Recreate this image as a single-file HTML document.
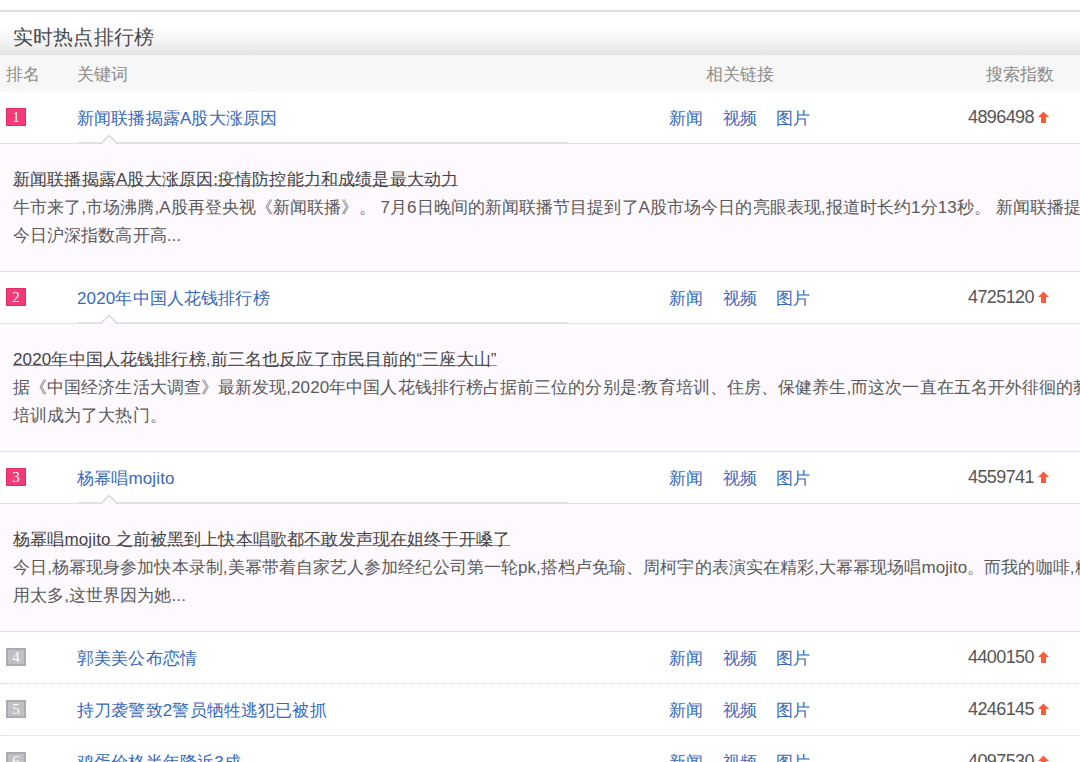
<!DOCTYPE html>
<html><head><meta charset="utf-8">
<style>
*{margin:0;padding:0;box-sizing:border-box}
html,body{width:1080px;height:762px;overflow:hidden;background:#fff}
body{font-family:"Liberation Sans",sans-serif;font-size:17px;color:#333;position:relative;letter-spacing:0.15px}
.a{position:absolute;white-space:nowrap}
.topline{position:absolute;left:0;top:10px;width:1080px;height:2px;background:#e0e0e6}
.band{position:absolute;left:0;top:12px;width:1080px;height:43px;background:linear-gradient(#fff 0%,#fff 30%,#f6f6f7 65%,#e4e4e6 100%)}
.title{left:13px;top:23px;font-size:20px;color:#4a4a4a;line-height:28px}
.head{position:absolute;left:0;top:55px;width:1080px;height:37px;background:#f7f7f7}
.hd{top:64px;color:#8c8c8c;line-height:22px}
.row{position:absolute;left:0;width:1080px;height:52px;background:#fff;border-bottom:1px solid #e1e1e5}
.row.ex::after{content:"";position:absolute;left:77px;width:491px;bottom:0;height:1px;background:#e3e3e7}
.notch{position:absolute;left:100px;top:-10px}
.badge{position:absolute;left:6px;top:16px;width:20px;height:18px;background:#f13a76;border:1px solid #e22b69;color:#fff;font-family:"Liberation Serif",serif;font-size:15px;line-height:16px;text-align:center;letter-spacing:0}
.badge.g{background:#c0c1c4;border:2px solid #aaabaf;line-height:14px}
.kw{position:absolute;left:77px;top:16px;color:#386abb;line-height:22px}
.lk{position:absolute;top:16px;color:#386abb;line-height:22px}
.num{position:absolute;left:968px;top:14px;color:#555;line-height:22px;font-size:18px;letter-spacing:-0.6px}
.arr{position:absolute;left:1038px;top:19px}
.det{position:absolute;left:0;width:1080px;height:128px;background:#fdf9fe;border-bottom:1px solid #e1e1e5}
.det .ln{position:absolute;left:13px;white-space:nowrap;color:#5a5a5a;line-height:28px;letter-spacing:0.08px}
.det .t{letter-spacing:0.15px;color:#444;text-decoration:underline;text-decoration-color:#8c8c8c;text-underline-offset:0px}
.dot{border-bottom:1px dotted #d8d8d8}
</style></head>
<body>
<div class="topline"></div>
<div class="band"></div>
<div class="a title">实时热点排行榜</div>
<div class="head"></div>
<div class="a hd" style="left:6px">排名</div>
<div class="a hd" style="left:77px">关键词</div>
<div class="a hd" style="left:706px">相关链接</div>
<div class="a hd" style="left:986px">搜索指数</div>

<!-- row 1 -->
<div class="row ex" style="top:92px">
  <div class="badge">1</div>
  <div class="kw">新闻联播揭露A股大涨原因</div>
  <div class="lk" style="left:669px">新闻</div><div class="lk" style="left:723px">视频</div><div class="lk" style="left:776px">图片</div>
  <div class="num">4896498</div>
  <svg class="arr" width="11" height="12" viewBox="0 0 11 12"><path d="M5.5 0.5L11 6H8V12H3V6H0Z" fill="#fa5d3e"/></svg>
</div>
<div class="det" style="top:144px"><svg class="notch" width="18" height="11" viewBox="0 0 18 11"><path d="M0.5 10L9 1.5L17.5 10" fill="#fdf9fe" stroke="#d8d8d8" stroke-width="1.3"/><rect x="0" y="10" width="18" height="1" fill="#fdf9fe"/></svg>
  <div class="ln t" style="top:22px">新闻联播揭露A股大涨原因:疫情防控能力和成绩是最大动力</div>
  <div class="ln" style="top:50px">牛市来了,市场沸腾,A股再登央视《新闻联播》。 7月6日晚间的新闻联播节目提到了A股市场今日的亮眼表现,报道时长约1分13秒。 新闻联播提到,</div>
  <div class="ln" style="top:78px">今日沪深指数高开高...</div>
</div>

<!-- row 2 -->
<div class="row ex" style="top:272px">
  <div class="badge">2</div>
  <div class="kw">2020年中国人花钱排行榜</div>
  <div class="lk" style="left:669px">新闻</div><div class="lk" style="left:723px">视频</div><div class="lk" style="left:776px">图片</div>
  <div class="num">4725120</div>
  <svg class="arr" width="11" height="12" viewBox="0 0 11 12"><path d="M5.5 0.5L11 6H8V12H3V6H0Z" fill="#fa5d3e"/></svg>
</div>
<div class="det" style="top:324px"><svg class="notch" width="18" height="11" viewBox="0 0 18 11"><path d="M0.5 10L9 1.5L17.5 10" fill="#fdf9fe" stroke="#d8d8d8" stroke-width="1.3"/><rect x="0" y="10" width="18" height="1" fill="#fdf9fe"/></svg>
  <div class="ln t" style="top:22px">2020年中国人花钱排行榜,前三名也反应了市民目前的“三座大山”</div>
  <div class="ln" style="top:50px">据《中国经济生活大调查》最新发现,2020年中国人花钱排行榜占据前三位的分别是:教育培训、住房、保健养生,而这次一直在五名开外徘徊的教育</div>
  <div class="ln" style="top:78px">培训成为了大热门。</div>
</div>

<!-- row 3 -->
<div class="row ex" style="top:452px">
  <div class="badge">3</div>
  <div class="kw">杨幂唱mojito</div>
  <div class="lk" style="left:669px">新闻</div><div class="lk" style="left:723px">视频</div><div class="lk" style="left:776px">图片</div>
  <div class="num">4559741</div>
  <svg class="arr" width="11" height="12" viewBox="0 0 11 12"><path d="M5.5 0.5L11 6H8V12H3V6H0Z" fill="#fa5d3e"/></svg>
</div>
<div class="det" style="top:504px"><svg class="notch" width="18" height="11" viewBox="0 0 18 11"><path d="M0.5 10L9 1.5L17.5 10" fill="#fdf9fe" stroke="#d8d8d8" stroke-width="1.3"/><rect x="0" y="10" width="18" height="1" fill="#fdf9fe"/></svg>
  <div class="ln t" style="top:22px">杨幂唱mojito 之前被黑到上快本唱歌都不敢发声现在姐终于开嗓了</div>
  <div class="ln" style="top:50px">今日,杨幂现身参加快本录制,美幂带着自家艺人参加经纪公司第一轮pk,搭档卢免瑜、周柯宇的表演实在精彩,大幂幂现场唱mojito。而我的咖啡,糖不</div>
  <div class="ln" style="top:78px">用太多,这世界因为她...</div>
</div>

<!-- row 4 -->
<div class="row dot" style="top:632px">
  <div class="badge g">4</div>
  <div class="kw">郭美美公布恋情</div>
  <div class="lk" style="left:669px">新闻</div><div class="lk" style="left:723px">视频</div><div class="lk" style="left:776px">图片</div>
  <div class="num">4400150</div>
  <svg class="arr" width="11" height="12" viewBox="0 0 11 12"><path d="M5.5 0.5L11 6H8V12H3V6H0Z" fill="#fa5d3e"/></svg>
</div>
<!-- row 5 -->
<div class="row dot" style="top:684px">
  <div class="badge g">5</div>
  <div class="kw">持刀袭警致2警员牺牲逃犯已被抓</div>
  <div class="lk" style="left:669px">新闻</div><div class="lk" style="left:723px">视频</div><div class="lk" style="left:776px">图片</div>
  <div class="num">4246145</div>
  <svg class="arr" width="11" height="12" viewBox="0 0 11 12"><path d="M5.5 0.5L11 6H8V12H3V6H0Z" fill="#fa5d3e"/></svg>
</div>
<!-- row 6 -->
<div class="row" style="top:736px">
  <div class="badge g">6</div>
  <div class="kw">鸡蛋价格半年降近3成</div>
  <div class="lk" style="left:669px">新闻</div><div class="lk" style="left:723px">视频</div><div class="lk" style="left:776px">图片</div>
  <div class="num">4097530</div>
  <svg class="arr" width="11" height="12" viewBox="0 0 11 12"><path d="M5.5 0.5L11 6H8V12H3V6H0Z" fill="#fa5d3e"/></svg>
</div>
</body></html>
